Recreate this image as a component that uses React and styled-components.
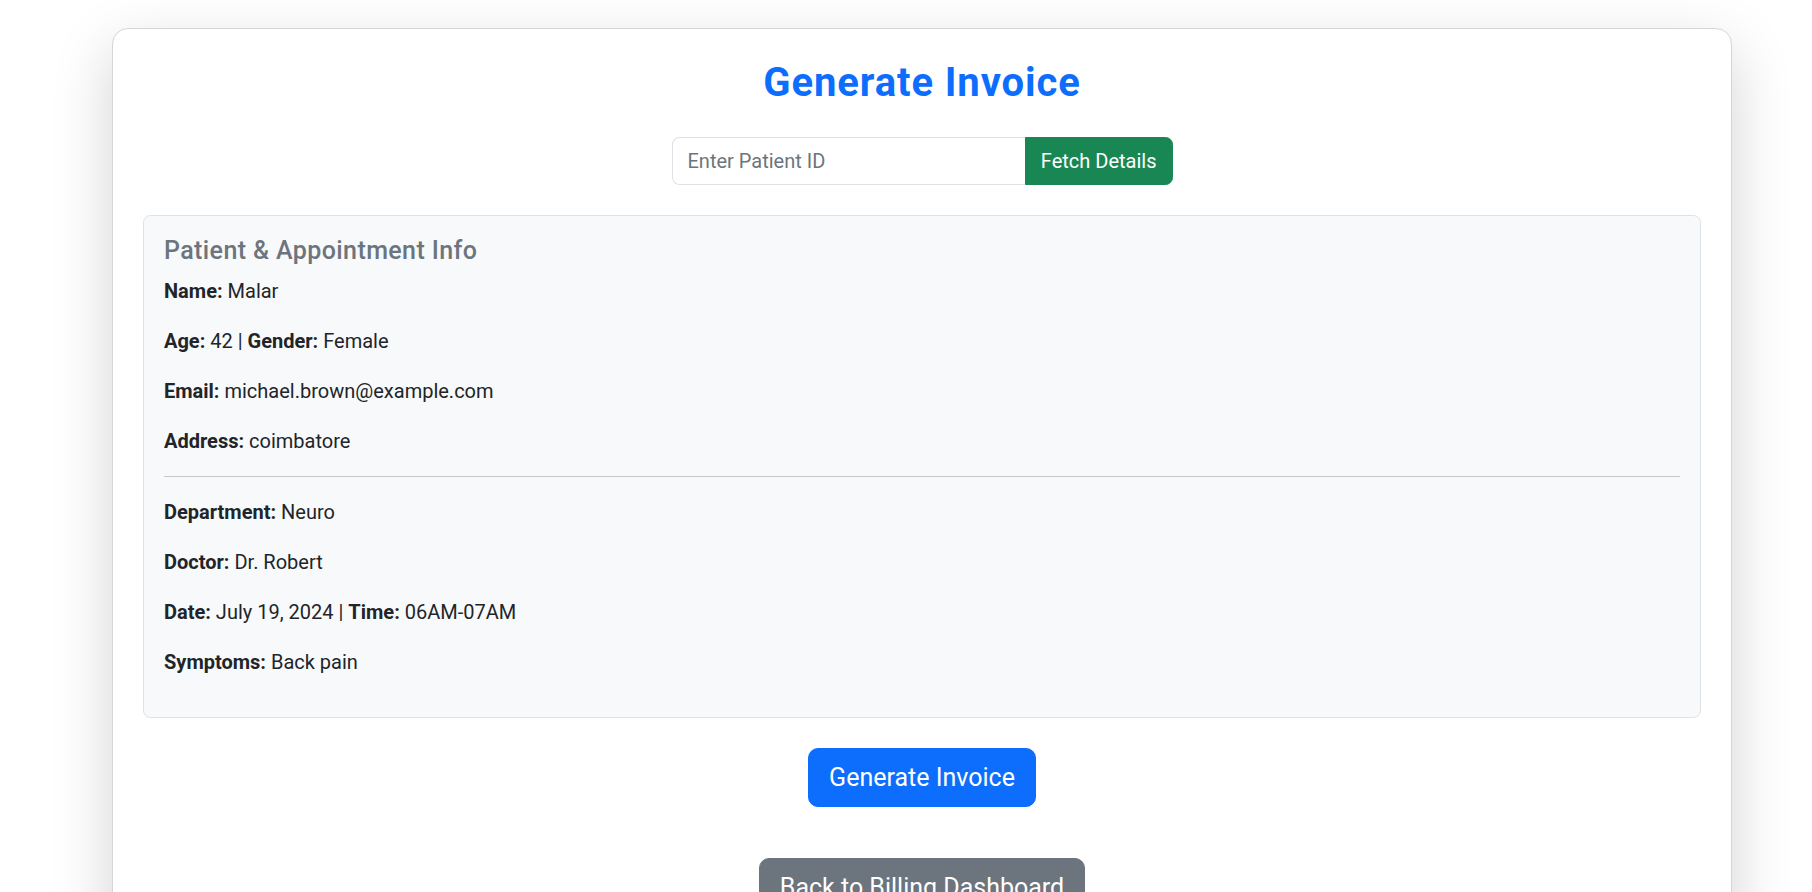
import React from "react";
import styled, { createGlobalStyle } from "styled-components";

const GlobalStyle = createGlobalStyle`
  * { box-sizing: border-box; }
  html, body { margin: 0; padding: 0; overflow: hidden; background: #fff; }
  body {
    font-family: Roboto, "Liberation Sans", sans-serif;
    font-size: 20px;
    line-height: 1.5;
    color: #212529;
  }
`;

const Page = styled.div`
  padding: 28px 0 0 112px;
`;

const Card = styled.div`
  width: 1620px;
  background: #fff;
  border: 1.25px solid #d5d6d8;
  border-radius: 16px;
  box-shadow: 0 20px 60px rgba(0, 0, 0, 0.175);
  padding: 30px 30px 60px;
`;

const Title = styled.h2`
  margin: 0 0 30px;
  text-align: center;
  font-size: 40px;
  line-height: 1.2;
  font-weight: 700;
  letter-spacing: 0.9px;
  color: #0d6efd;
`;

const SearchGroup = styled.div`
  display: flex;
  width: 501px;
  margin: 0 auto 30px;
`;

const SearchInput = styled.input`
  flex: 1;
  min-width: 0;
  height: 47.5px;
  padding: 7.5px 15px;
  font: inherit;
  font-size: 20px;
  color: #212529;
  background: #fff;
  border: 1.25px solid #dee2e6;
  border-right: none;
  border-radius: 7.5px 0 0 7.5px;
  outline: none;
  &::placeholder { color: #6c757d; }
`;

const Button = styled.button`
  font: inherit;
  font-size: ${(p) => (p.$lg ? "25px" : "20px")};
  line-height: 1.5;
  padding: ${(p) => (p.$lg ? "10px 20px" : "7.5px 15px")};
  color: #fff;
  background: ${(p) => p.$bg};
  border: 1.25px solid ${(p) => p.$bg};
  border-radius: ${(p) => (p.$lg ? "10px" : "7.5px")};
  cursor: pointer;
  white-space: nowrap;
`;

const FetchButton = styled(Button)`
  border-radius: 0 7.5px 7.5px 0;
`;

const InfoBox = styled.div`
  background: #f8f9fa;
  border: 1.25px solid #dee2e6;
  border-radius: 7.5px;
  padding: 20px;
`;

const InfoTitle = styled.h5`
  margin: 0 0 10px;
  font-size: 25px;
  line-height: 1.2;
  font-weight: 500;
  letter-spacing: 0.4px;
  color: #6c757d;
`;

const Row = styled.p`
  margin: 0 0 20px;
`;

const Label = styled.strong`
  font-weight: 700;
`;

const Divider = styled.hr`
  margin: 20px 0;
  border: 0;
  border-top: 1.25px solid #c6c7c9;
`;

const Actions = styled.div`
  display: flex;
  flex-direction: column;
  align-items: center;
  gap: 51px;
  margin-top: 30px;
`;

export default function App() {
  return (
    <>
      <GlobalStyle />
      <Page>
        <Card>
          <Title>Generate Invoice</Title>
          <SearchGroup>
            <SearchInput placeholder="Enter Patient ID" />
            <FetchButton $bg="#198754">Fetch Details</FetchButton>
          </SearchGroup>
          <InfoBox>
            <InfoTitle>Patient &amp; Appointment Info</InfoTitle>
            <Row><Label>Name:</Label> Malar</Row>
            <Row><Label>Age:</Label> 42 | <Label>Gender:</Label> Female</Row>
            <Row><Label>Email:</Label> michael.brown@example.com</Row>
            <Row><Label>Address:</Label> coimbatore</Row>
            <Divider />
            <Row><Label>Department:</Label> Neuro</Row>
            <Row><Label>Doctor:</Label> Dr. Robert</Row>
            <Row><Label>Date:</Label> July 19, 2024 | <Label>Time:</Label> 06AM-07AM</Row>
            <Row><Label>Symptoms:</Label> Back pain</Row>
          </InfoBox>
          <Actions>
            <Button $lg $bg="#0d6efd">Generate Invoice</Button>
            <Button $lg $bg="#6c757d">Back to Billing Dashboard</Button>
          </Actions>
        </Card>
      </Page>
    </>
  );
}
